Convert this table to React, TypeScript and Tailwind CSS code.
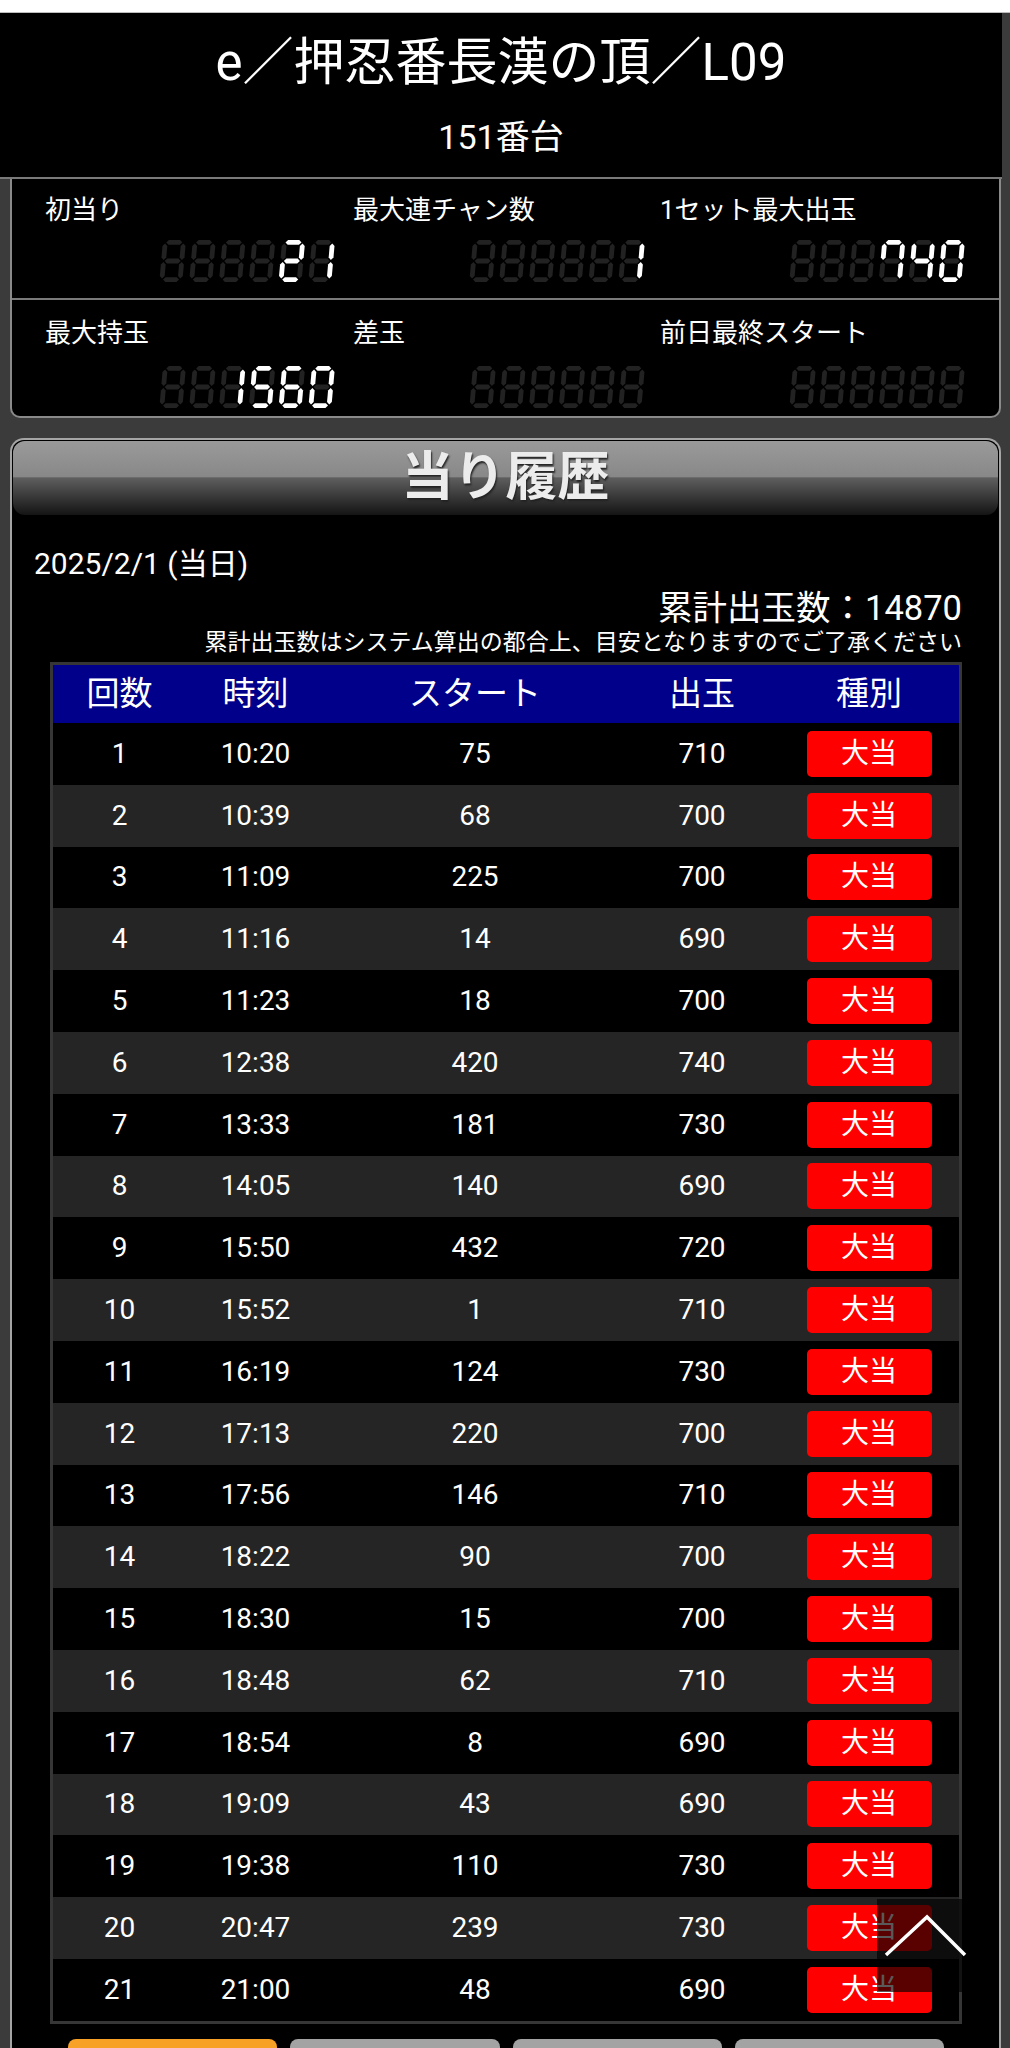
const SEGS: Record<string, string> = {
  "0": "abcdef",
  "1": "bc",
  "2": "abged",
  "3": "abgcd",
  "4": "fgbc",
  "5": "afgcd",
  "6": "afgedc",
  "7": "abcf",
  "8": "abcdefg",
  "9": "abcdfg",
};

const W = 23;
const H = 42;
const T = 4.8;
const G = 1.1;
const PITCH = 29.8;

function hSeg(y: number, x0: number, x1: number) {
  const h = T / 2;
  return `${x0},${y} ${x0 + h},${y - h} ${x1 - h},${y - h} ${x1},${y} ${x1 - h},${y + h} ${x0 + h},${y + h}`;
}

function vSeg(x: number, y0: number, y1: number) {
  const h = T / 2;
  return `${x},${y0} ${x + h},${y0 + h} ${x + h},${y1 - h} ${x},${y1} ${x - h},${y1 - h} ${x - h},${y0 + h}`;
}

const xl = T / 2;
const xr = W - T / 2;
const yt = T / 2;
const ym = H / 2;
const yb = H - T / 2;

const SHAPES: Record<string, string> = {
  a: hSeg(yt, xl + G, xr - G),
  b: vSeg(xr, yt + G, ym - G),
  c: vSeg(xr, ym + G, yb - G),
  d: hSeg(yb, xl + G, xr - G),
  e: vSeg(xl, ym + G, yb - G),
  f: vSeg(xl, yt + G, ym - G),
  g: hSeg(ym, xl + G, xr - G),
};

// 7セグ表示。数値は透明テキストとしても重ねて残す
function SegDisplay({ value }: { value: string }) {
  const padded = value.padStart(6, " ");
  return (
    <div className="relative h-[42px] w-[176px]">
      <svg width="176" height="42" viewBox="0 0 176 42" aria-hidden="true">
        {padded.split("").map((ch, i) => {
          const lit = SEGS[ch] ?? "";
          return (
            <g key={i} transform={`translate(${4 + i * PITCH} 0) skewX(-5)`}>
              {Object.keys(SHAPES).map((k) => (
                <polygon key={k} points={SHAPES[k]} fill={lit.includes(k) ? "#ffffff" : "#222222"} />
              ))}
            </g>
          );
        })}
      </svg>
      {value && (
        <span className="absolute inset-0 flex select-none items-center justify-end pr-[6px] text-[34px] leading-[42px] text-transparent">
          {value}
        </span>
      )}
    </div>
  );
}

type Stat = { label: string; value: string; offset: string };

const statRows: Stat[][] = [
  [
    { label: "初当り", value: "21", offset: "ml-[114px]" },
    { label: "最大連チャン数", value: "1", offset: "ml-[116px]" },
    { label: "1セット最大出玉", value: "740", offset: "ml-[129px]" },
  ],
  [
    { label: "最大持玉", value: "1560", offset: "ml-[114px]" },
    { label: "差玉", value: "", offset: "ml-[116px]" },
    { label: "前日最終スタート", value: "", offset: "ml-[129px]" },
  ],
];

const hits: Array<[number, string, number, number]> = [
  [1, "10:20", 75, 710],
  [2, "10:39", 68, 700],
  [3, "11:09", 225, 700],
  [4, "11:16", 14, 690],
  [5, "11:23", 18, 700],
  [6, "12:38", 420, 740],
  [7, "13:33", 181, 730],
  [8, "14:05", 140, 690],
  [9, "15:50", 432, 720],
  [10, "15:52", 1, 710],
  [11, "16:19", 124, 730],
  [12, "17:13", 220, 700],
  [13, "17:56", 146, 710],
  [14, "18:22", 90, 700],
  [15, "18:30", 15, 700],
  [16, "18:48", 62, 710],
  [17, "18:54", 8, 690],
  [18, "19:09", 43, 690],
  [19, "19:38", 110, 730],
  [20, "20:47", 239, 730],
  [21, "21:00", 48, 690],
];

const cols = "grid grid-cols-[133px_139px_300px_154px_1fr] items-center text-center";

export default function App() {
  return (
    <div className="relative min-h-[2048px] w-[1010px] overflow-hidden bg-[#3b3b3b] font-['Roboto','Noto_Sans_CJK_JP',sans-serif] text-white">
      <div className="h-[13px] border-b border-[#bdbdbd] bg-white" />

      <header className="w-[1002px] border-b-2 border-[#7a7a7a] bg-black pb-[20px] pt-[22px] text-center">
        <h1 className="text-[51px] leading-[56px]">e／押忍番長漢の頂／L09</h1>
        <p className="mt-[26px] text-[34px] leading-[40px]">151番台</p>
      </header>

      <section className="ml-[10px] w-[991px] rounded-b-[10px] border-x-2 border-b-2 border-[#8a8a8a] bg-black">
        {statRows.map((row, r) => (
          <div key={r}>
            {r === 1 && <div className="h-[2px] bg-[#7a7a7a]" />}
            <div
              className={
                r === 0
                  ? "grid grid-cols-[308px_307px_1fr] pb-[16px] pl-[33px] pt-[16px]"
                  : "grid grid-cols-[308px_307px_1fr] pb-[8px] pl-[33px] pt-[18px]"
              }
            >
              {row.map((s) => (
                <div key={s.label} className="flex flex-col">
                  <span className="text-[26px] leading-[30px]">{s.label}</span>
                  <div className={(r === 0 ? "mt-[15px] " : "mt-[18px] ") + s.offset}>
                    <SegDisplay value={s.value} />
                  </div>
                </div>
              ))}
            </div>
          </div>
        ))}
      </section>

      <section className="ml-[10px] mt-[20px] w-[991px] rounded-t-[14px] border-x-2 border-t-2 border-[#a5a5a5] bg-black">
        <div className="m-[1px] rounded-[12px] bg-[linear-gradient(to_bottom,#9a9a9a_0%,#888888_48%,#5e5e5e_50%,#141414_100%)] text-center text-[52px] font-bold leading-[74px] text-[#ececec] [text-shadow:1px_2px_2px_#222]">
          当り履歴
        </div>

        <div className="pb-[10px] pl-[22px] pr-[37px] pt-[30px]">
          <p className="text-[30px] leading-[36px]">2025/2/1 (当日)</p>
          <div className="ml-[16px]">
            <p className="mt-[6px] text-right text-[34.5px] leading-[40px]">累計出玉数：14870</p>
            <p className="mt-[2px] text-right text-[23px] leading-[26px]">
              累計出玉数はシステム算出の都合上、目安となりますのでご了承ください
            </p>

            <div className="mt-[6px] border-[3px] border-[#363636]">
              <div className={cols + " h-[58px] bg-[#00008b] text-[33px]"}>
                <span>回数</span>
                <span>時刻</span>
                <span>スタート</span>
                <span>出玉</span>
                <span>種別</span>
              </div>
              {hits.map(([n, time, start, out]) => (
                <div
                  key={n}
                  className={cols + " h-[61.8px] text-[28px] " + (n % 2 === 0 ? "bg-[#252525]" : "bg-black")}
                >
                  <span>{n}</span>
                  <span>{time}</span>
                  <span>{start}</span>
                  <span>{out}</span>
                  <span className="flex justify-center">
                    <span className="flex h-[46px] w-[125px] items-center justify-center rounded-[5px] bg-[#ff0000] text-[28px]">
                      大当
                    </span>
                  </span>
                </div>
              ))}
            </div>

            <div className="mx-[18px] mt-[15px] grid grid-cols-4 gap-[13px]">
              <div className="h-[50px] rounded-t-[8px] bg-[#f7a127]" />
              <div className="h-[50px] rounded-t-[8px] bg-[#a3a3a3]" />
              <div className="h-[50px] rounded-t-[8px] bg-[#a3a3a3]" />
              <div className="h-[50px] rounded-t-[8px] bg-[#a3a3a3]" />
            </div>
          </div>
        </div>
      </section>

      <button className="absolute left-[877px] top-[1899px] h-[93px] w-[85px] bg-black/65" aria-label="ページトップへ">
        <svg width="85" height="93" viewBox="0 0 85 93" className="overflow-visible">
          <polyline points="9,56 50,18 88,56" fill="none" stroke="#ffffff" strokeWidth="3.5" />
        </svg>
      </button>
    </div>
  );
}
